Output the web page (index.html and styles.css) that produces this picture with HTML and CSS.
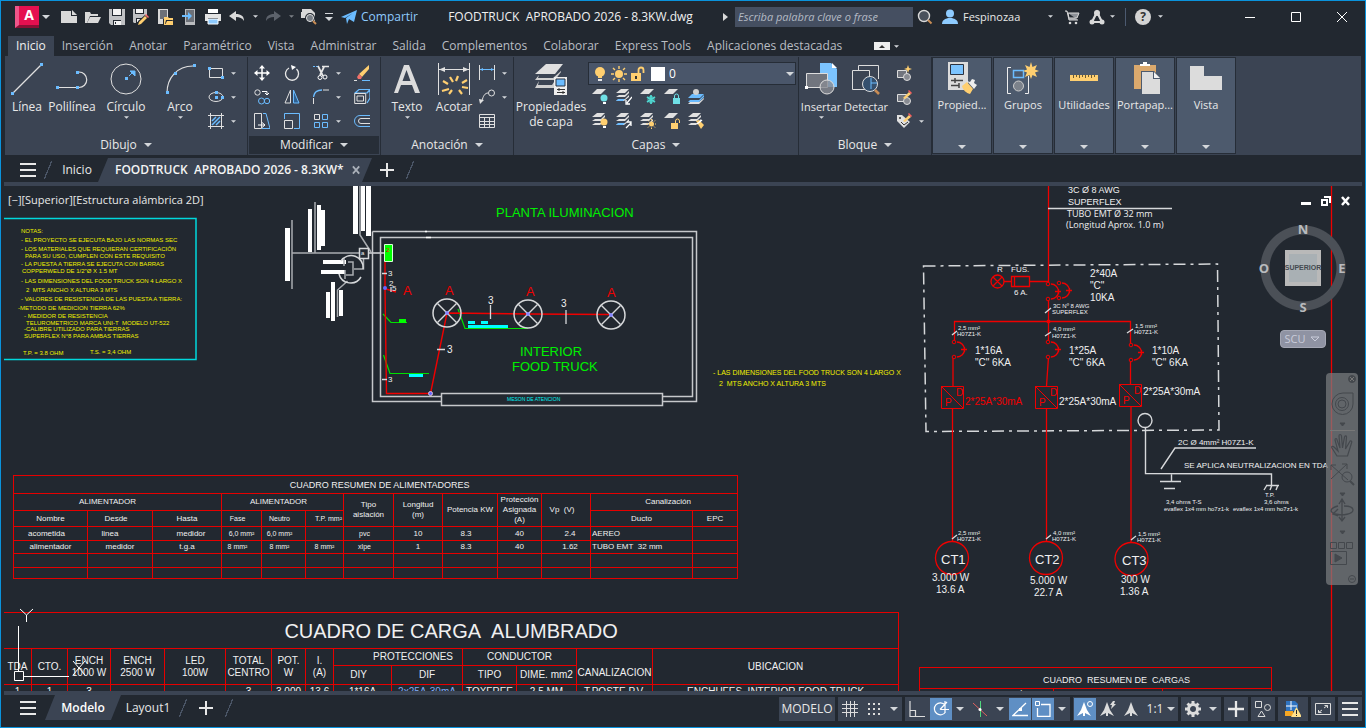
FILE: index.html
```html
<!DOCTYPE html>
<html lang="es">
<head>
<meta charset="utf-8">
<title>FOODTRUCK APROBADO 2026 - 8.3KW.dwg</title>
<link rel="stylesheet" href="styles.css">
</head>
<body>
<svg class="sprite" aria-hidden="true">
  <symbol id="down" viewBox="0 0 8 4"><path d="M0 0h8L4 4z" fill="#d4d7db"/></symbol>
  <symbol id="new" viewBox="0 0 16 16"><path d="M0 2h10v5h6v7H0z" fill="#d9d9d9"/><path d="M11 1l5 5h-5z" fill="#d9d9d9"/></symbol>
  <symbol id="open" viewBox="0 0 16 16"><path d="M0 14V3h5l1 2h7v2H5L2 14z" fill="#d9d9d9"/><path d="M5 8h11l-3 6H2z" fill="#d9d9d9"/></symbol>
  <symbol id="save" viewBox="0 0 16 16"><path d="M0 0h16v16H2l-2-2z" fill="#bfc1c4"/><path d="M3 0h10v7H3zM4 11h8v5H4z" fill="#222830"/><path d="M4 0h8v6H4zM5 12h7v4H5z" fill="#f4f4f4"/><path d="M6 13h1v2H6z" fill="#222830"/></symbol>
  <symbol id="saveas" viewBox="0 0 16 16"><path d="M0 0h14v7l-7 7H1l-1-1z" fill="#bfc1c4"/><path d="M2 0h9v5H2zM3 9h6v5H3z" fill="#222830"/><path d="M3 0h7v4H3zM4 10h4v3H4z" fill="#f4f4f4"/><path d="M5 12l7-6 3 3-7 6-4 1z" fill="#222830"/><path d="M6 13l6-6 2 2-6 6-3 1z" fill="#ffcf70"/><path d="M13 5l3 3-1 1-3-3z" fill="#ff6b6b"/></symbol>
  <symbol id="openweb" viewBox="0 0 16 16"><path d="M1 0h10v8H6v7H1z" fill="#d9d9d9"/><path d="M3 1h7v9H3z" fill="#6d7178"/><path d="M7 8h4l1 1h4v7H7z" fill="#ffcf70"/><path d="M9 11h7l-2 4H8z" fill="#222830"/><path d="M10 12h6l-2 4H8z" fill="#ffcf70"/></symbol>
  <symbol id="saveweb" viewBox="0 0 16 16"><path d="M4 0h10v16H4z" fill="#b9bbbe"/><path d="M5 1h8v12H5z" fill="#6d7178"/><path d="M1 6h6V3l4 4-4 4V8H1z" fill="#6bbcff"/></symbol>
  <symbol id="print" viewBox="0 0 16 16"><path d="M3 0h10v4H3z" fill="#fff"/><path d="M0 5h16v7h-3V9H3v3H0z" fill="#e4e4e4"/><path d="M3 10h10v5H3z" fill="#8ecbff" stroke="#fff"/></symbol>
  <symbol id="undo" viewBox="0 0 16 16"><path d="M7 2v3c5 0 8 2 8 7-2-3-4-4-8-4v4L0 7z" fill="currentColor"/></symbol>
  <symbol id="redo" viewBox="0 0 16 16"><path d="M9 2v3C4 5 1 7 1 12c2-3 4-4 8-4v4l7-5z" fill="currentColor"/></symbol>
  <symbol id="preview" viewBox="0 0 16 16"><path d="M1 0h9l4 4v8H5V9H0V3h1z" fill="#d9d9d9"/><circle cx="9" cy="9" r="4" fill="#777d85" stroke="#222830" stroke-width="2"/><circle cx="9" cy="9" r="3.500" fill="none" stroke="#eee"/><path d="M12 12l3 3" stroke="#c98d55" stroke-width="2"/></symbol>
  <symbol id="share" viewBox="0 0 16 16"><path d="M0 8L16 1l-3 12-5-3-2 5-1-6 7-5-8 5z" fill="#6bbcff"/></symbol>
  <symbol id="glass" viewBox="0 0 16 16"><circle cx="7" cy="7" r="5.500" fill="#4a515c" stroke="#d9d9d9" stroke-width="1.400"/><path d="M11 11l3.500 3.500" stroke="#c98d55" stroke-width="2"/></symbol>
  <symbol id="user" viewBox="0 0 16 16"><circle cx="8" cy="4.500" r="4" fill="#8ecbff"/><path d="M0 15c0-4 3-5 6-6h4c3 1 6 2 6 6z" fill="#8ecbff"/></symbol>
  <symbol id="cart" viewBox="0 0 16 16"><path d="M1 2h2l2 9h9M4 4h11l-2 5H5z" fill="#8e9298" stroke="#d9d9d9"/><circle cx="6" cy="14" r="1.300" fill="#d9d9d9"/><circle cx="12" cy="14" r="1.300" fill="#d9d9d9"/></symbol>
  <symbol id="adesk" viewBox="0 0 16 16"><path d="M8 3L3 13h10z" fill="none" stroke="#d9d9d9" stroke-width="2.200"/><circle cx="8" cy="4" r="3" fill="#d9d9d9"/><circle cx="3" cy="13" r="2.500" fill="#d9d9d9"/><circle cx="13" cy="13" r="2.500" fill="#d9d9d9"/></symbol>

  <symbol id="line" viewBox="0 0 32 32"><path d="M2 30L30 2" stroke="#e0e0e0" stroke-width="1.200"/><path d="M0 29h3v3H0zM29 0h3v3h-3z" fill="#6bbcff"/></symbol>
  <symbol id="pline" viewBox="0 0 32 32"><path d="M2 24.500h20M23 9a7.500 7.500 0 010 15.500" fill="none" stroke="#e0e0e0" stroke-width="1.200"/><path d="M0 23h3v3H0zM20 23h3v3h-3zM20 8h3v3h-3z" fill="#6bbcff"/></symbol>
  <symbol id="circle" viewBox="0 0 32 32"><circle cx="16" cy="16" r="15" fill="none" stroke="#e0e0e0"/><path d="M15 14h3v3h-3z" fill="#6bbcff"/><path d="M19 13l4-4M20 8h5v5z" fill="#6bbcff" stroke="#6bbcff"/></symbol>
  <symbol id="arc" viewBox="0 0 32 32"><path d="M3 30C3 15 13 3 29 3" fill="none" stroke="#e0e0e0" stroke-width="1.200"/><path d="M2 28h3v3H2zM10 9h3v3h-3zM29 1h3v3h-3z" fill="#6bbcff"/></symbol>
  <symbol id="rect" viewBox="0 0 16 16"><path d="M1.500 3.500h13v9h-13z" fill="none" stroke="#e0e0e0"/><path d="M0 2h3v3H0zM13 11h3v3h-3z" fill="#6bbcff"/></symbol>
  <symbol id="ellipse" viewBox="0 0 16 16"><ellipse cx="8" cy="8" rx="7" ry="4.500" fill="none" stroke="#e0e0e0"/><path d="M7 2h3v3H7zM7 7h3v3H7zM13 7h3v3h-3z" fill="#6bbcff"/></symbol>
  <symbol id="hatch" viewBox="0 0 16 16"><path d="M2.500 0v16M13.500 0v16M0 2.500h16M0 13.500h16" stroke="#e0e0e0"/><path d="M4 8l4-4M4 12l8-8M8 12l4-4" stroke="#6bbcff" stroke-width="1.500"/></symbol>
  <symbol id="move" viewBox="0 0 16 16"><path d="M8 1v14M1 8h14" stroke="#fff" stroke-width="1.500"/><path d="M8 0l3 3.500H5zM8 16l3-3.500H5zM0 8l3.500-3v6zM16 8l-3.500-3v6z" fill="#fff"/></symbol>
  <symbol id="rotate" viewBox="0 0 16 16"><path d="M5 3a6.500 6.500 0 107.500 1" fill="none" stroke="#e8e8e8" stroke-width="1.300"/><path d="M7 0l5 2-4 3z" fill="#fff"/></symbol>
  <symbol id="trim" viewBox="0 0 16 16"><path d="M0 1.500h5" stroke="#6bbcff" stroke-dasharray="2 1"/><path d="M9 1.500h7M5 1l5 10M11 2L7 10" stroke="#e8e8e8" stroke-width="1.700"/><circle cx="7" cy="12.500" r="2" fill="none" stroke="#fff"/><circle cx="12" cy="12" r="2" fill="none" stroke="#fff"/></symbol>
  <symbol id="erase" viewBox="0 0 16 16"><path d="M15 0v4l-7 8-3-3z" fill="#ffcf70"/><path d="M5 9l3 3-1 2H4l-1-2z" fill="#f0706a"/><path d="M0 15.500h3" stroke="#e0e0e0"/><path d="M8 15.500h8" stroke="#6bbcff"/></symbol>
  <symbol id="copy" viewBox="0 0 16 16"><circle cx="3.500" cy="3.500" r="2.700" fill="none" stroke="#e0e0e0"/><path d="M8 2.500h5v3M11 4l2 2 2-2" fill="none" stroke="#fff"/><circle cx="7.500" cy="12" r="3" fill="none" stroke="#6bbcff"/><circle cx="13" cy="12" r="2.700" fill="none" stroke="#6bbcff"/></symbol>
  <symbol id="mirror" viewBox="0 0 16 16"><path d="M6.500 1v13H1z" fill="none" stroke="#e0e0e0"/><path d="M9.500 1v13h5.500z" fill="#2f5f8f" stroke="#6bbcff"/></symbol>
  <symbol id="fillet" viewBox="0 0 16 16"><path d="M.5 15V9" stroke="#e0e0e0"/><path d="M.5 8C1 4 4 1 9 1" fill="none" stroke="#6bbcff" stroke-width="1.300"/><path d="M10 1h6" stroke="#e0e0e0"/></symbol>
  <symbol id="explode" viewBox="0 0 16 16"><path d="M1 4l4-3.500h11L13 4zM13 4l3-3v8l-3 5" fill="none" stroke="#6bbcff" stroke-width="1.200"/><path d="M.7 4.500h11v10H.7zM3 7h6.500v5H3z" fill="none" stroke="#e0e0e0"/></symbol>
  <symbol id="stretch" viewBox="0 0 16 16"><path d="M.5.500h7v15h-7z" fill="none" stroke="#e0e0e0"/><path d="M9 .5h3l4 15H8" fill="none" stroke="#6bbcff"/><path d="M4 12h6M8 9.500l3 2.500-3 2.500" fill="none" stroke="#fff"/></symbol>
  <symbol id="scale" viewBox="0 0 16 16"><path d="M.5 6V.5h15v15H10" fill="none" stroke="#6bbcff"/><path d="M.5 7.500h8v8h-8z" fill="none" stroke="#e0e0e0"/></symbol>
  <symbol id="array" viewBox="0 0 16 16"><path d="M1.500 1.500h5v5h-5z" fill="none" stroke="#e0e0e0"/><path d="M9.500 1.500h5v5h-5zM1.500 9.500h5v5h-5zM9.500 9.500h5v5h-5z" fill="none" stroke="#6bbcff"/></symbol>
  <symbol id="offset" viewBox="0 0 16 16"><path d="M16 2.500H6a5.500 5.500 0 000 11h10" fill="none" stroke="#6bbcff"/><path d="M16 5.500H7a2.500 2.500 0 000 5h9" fill="none" stroke="#e0e0e0"/></symbol>
  <symbol id="bigA" viewBox="0 0 32 32"><path fill-rule="evenodd" d="M13 2h5l11 28h-5l-3-8H10l-3 8H3zM15.500 7l-4 11h8z" fill="#dcdcdc"/></symbol>
  <symbol id="dim" viewBox="0 0 32 32"><path d="M.5 0v32M31.500 0v32M1 6.500h30" stroke="#e0e0e0"/><path d="M1 6.500l6-2.500v5zM31 6.500L25 4v5z" fill="#e0e0e0"/><path d="M12 14l3 5M20 13l-2 5M24 20l5-3M24 24l6 1M5 18l5 3M4 28l7-2M14 27l-3 4M21 27l3 4" stroke="#ffcf70" stroke-width="2.200"/></symbol>
  <symbol id="dimlin" viewBox="0 0 16 16"><path d="M.5 0v15M15.500 0v15" stroke="#e0e0e0"/><path d="M1 4.500h14" stroke="#6bbcff"/><path d="M1 4.500L4 3v3zM15 4.500L12 3v3z" fill="#6bbcff"/></symbol>
  <symbol id="leader" viewBox="0 0 16 16"><circle cx="12.500" cy="4" r="3" fill="none" stroke="#e0e0e0"/><path d="M9 4C6 4 4 7 3 12" fill="none" stroke="#e0e0e0"/><path d="M0 10l5 1-4 4z" fill="#e0e0e0"/></symbol>
  <symbol id="table" viewBox="0 0 16 16"><path d="M.5 1.500h15v13H.5zM.5 4.500h15M.5 8.500h15M.5 11.500h15M5.500 5v9.500M10.500 5v9.500" fill="none" stroke="#e0e0e0"/></symbol>
  <symbol id="layers" viewBox="0 0 32 32"><path d="M11 1h17l-8 10H0z" fill="#e0e0e0"/><path d="M4 12l-4 5h20l6-8v-1l-8 7H3M4 18l-4 7h19v-6l-2 3H3" fill="#d0d0d0"/><path d="M19 14h13v18H19z" fill="#eee"/><path d="M21 16h9v7h-9z" fill="#6bbcff" stroke="#2b3240"/><path d="M22 26.500h8M22 29.500h8M24 25v3M28 28v3" stroke="#333"/></symbol>
  <symbol id="sheet" viewBox="0 0 16 16"><path d="M5 0h9L9 5H0z" fill="#e0e0e0"/></symbol>
  <symbol id="stack" viewBox="0 0 16 16"><path d="M5 0h8L9 4H0zM3 6L0 8h9l4-4v-2l-4 4zM3 10l-3 2h8l5-4V6l-4 4z" fill="#e0e0e0"/></symbol>
  <symbol id="lay-off" viewBox="0 0 16 16"><use href="#sheet"/><circle cx="12" cy="9" r="3.500" fill="#6fe0e6"/><path d="M11 13h3v2h-3z" fill="#fff"/></symbol>
  <symbol id="lay-iso" viewBox="0 0 16 16"><use href="#stack"/><path d="M0 12l2-2h7l-2 2z" fill="#6bbcff"/><path d="M16 8l-5 6M10 11v4h4" fill="none" stroke="#fff" stroke-width="1.300"/></symbol>
  <symbol id="lay-frz" viewBox="0 0 16 16"><use href="#sheet"/><path d="M11 6v9M7 8l8 5M15 8l-8 5" stroke="#4fd6d0" stroke-width="1.800"/><circle cx="11" cy="10.500" r="3" fill="none" stroke="#4fd6d0"/></symbol>
  <symbol id="lay-lock" viewBox="0 0 16 16"><use href="#sheet"/><path d="M9 9h7v6H9z" fill="#6fe0e6"/><path d="M10.500 9V7a2 2 0 014 0v2" fill="none" stroke="#6fe0e6"/></symbol>
  <symbol id="lay-cur" viewBox="0 0 16 16"><path d="M4 5h12l-4 4H0zM2 11l-2 2h11l5-5v-2l-5 5z" fill="#6bbcff"/><path d="M0 15h11l5-5v-1l-5 4H2z" fill="#e0e0e0"/><circle cx="8" cy="3" r="3" fill="#d0d0d0"/></symbol>
  <symbol id="lay-on" viewBox="0 0 16 16"><use href="#stack"/><circle cx="12" cy="9" r="3.500" fill="#ffcf70"/><path d="M11 13h3v2h-3z" fill="#fff"/></symbol>
  <symbol id="lay-uniso" viewBox="0 0 16 16"><use href="#stack"/><path d="M0 12l2-2h7l-2 2z" fill="#6bbcff"/><path d="M10 15l5-5M11 9h4v4" fill="none" stroke="#fff" stroke-width="1.300"/></symbol>
  <symbol id="lay-thaw" viewBox="0 0 16 16"><use href="#stack"/><circle cx="11.500" cy="11" r="2.500" fill="#ffcf70"/><path d="M11.500 6v1.500M11.500 14.500V16M6.500 11H8M15 11h1.500M8 7.500l1 1M14 13.500l1 1M15 7.500l-1 1M9 13.500l-1 1" stroke="#ffcf70"/></symbol>
  <symbol id="lay-unlock" viewBox="0 0 16 16"><use href="#sheet"/><path d="M7 10h7v6H7z" fill="#ffcf70"/><path d="M11.500 10V8a2 2 0 014 0v2" fill="none" stroke="#ffcf70"/></symbol>
  <symbol id="lay-match" viewBox="0 0 16 16"><use href="#stack"/><path d="M8 8l3-1 5 5-3 4z" fill="#ffcf70"/><path d="M9 11l5-4" stroke="#fff" stroke-width="1.500"/></symbol>
  <symbol id="bulb" viewBox="0 0 16 16"><circle cx="8" cy="6" r="5" fill="#ffcf70"/><path d="M6 10h4v2H6z" fill="#ffcf70"/><path d="M6 13h4v2H6z" fill="#e8e8e8"/></symbol>
  <symbol id="sun" viewBox="0 0 16 16"><circle cx="8" cy="8" r="4" fill="#ffcf70"/><path d="M8 0v3M8 13v3M0 8h3M13 8h3M2 2l2 2M12 12l2 2M14 2l-2 2M4 12l-2 2" stroke="#ffcf70" stroke-width="1.400"/></symbol>
  <symbol id="lock" viewBox="0 0 16 16"><path d="M1 7h10v8H1z" fill="#ffcf70"/><path d="M8.500 7V4a2.500 2.500 0 015 0v3" fill="none" stroke="#ffcf70" stroke-width="1.800"/><path d="M5 10h2v3H5z" fill="#333"/></symbol>
  <symbol id="insert" viewBox="0 0 32 32"><path d="M15 0h11l6 6v18H15z" fill="#7cc4ff"/><path d="M27 0l5 5h-5z" fill="#fff"/><path d="M1.500 10.500h21v14h-21z" fill="#71757e" stroke="#ddd"/><circle cx="22" cy="24" r="7" fill="#888b92" fill-opacity=".8" stroke="#ddd"/><path d="M0 23h3v3H0z" fill="#fff"/></symbol>
  <symbol id="detect" viewBox="0 0 32 32"><path d="M8.500 8V2.500h20V16M2.500 7.500h17v19h-17z" fill="none" stroke="#ddd"/><circle cx="20" cy="21" r="7.500" fill="#35506e" stroke="#ddd"/><path d="M21 15v11M21 20h6" stroke="#6bbcff"/><path d="M25 27l4 4" stroke="#c98d55" stroke-width="2.500"/></symbol>
  <symbol id="blk-new" viewBox="0 0 16 16"><path d="M1.500 5.500h9v7h-9z" fill="#71757e" stroke="#ddd"/><circle cx="11" cy="12" r="3.500" fill="#888b92" stroke="#ddd"/><path d="M12 0l1 3 3 1-3 1-1 3-1-3-3-1 3-1z" fill="#ffcf70"/></symbol>
  <symbol id="blk-edit" viewBox="0 0 16 16"><path d="M1.500 5.500h9v7h-9z" fill="#71757e" stroke="#ddd"/><circle cx="11" cy="12" r="3.500" fill="#888b92" stroke="#ddd"/><path d="M7 9l6-6 2 2-6 5z" fill="#ffcf70"/><path d="M13 1l3 3-1 1-3-3z" fill="#ff5f5f"/></symbol>
  <symbol id="blk-att" viewBox="0 0 16 16"><path d="M1 2h5l8 7-6 6-7-7z" fill="#e0e0e0"/><circle cx="4" cy="5" r="1" fill="#333"/><path d="M5 9l3 3 4-3" fill="none" stroke="#333"/><path d="M7 8l6-6 2 2-6 5z" fill="#ffcf70"/><path d="M13 0l3 3-1 1-3-3z" fill="#ff5f5f"/></symbol>
  <symbol id="props" viewBox="0 0 32 32"><path d="M2 0h20v28H2z" fill="#dcdcdc"/><path d="M4.500 2.500h13v10h-13z" fill="#7cc4ff" stroke="#2b3240"/><path d="M5 18.500h12M5 23.500h8M9 16v5M13 21v5" stroke="#444" stroke-width="1.500"/><path d="M16 24l5-4 6 7-3 5c-4-1-7-4-8-8z" fill="#ffcf70"/><path d="M21 19l3 1 2-3 3 1-1 3 3 2-3 4z" fill="#eee"/></symbol>
  <symbol id="groups" viewBox="0 0 32 32"><path d="M4 5.500H.5v26H4M18 31.500h3.500V14" fill="none" stroke="#eee"/><path d="M6.500 8.500h10v7h-10z" fill="none" stroke="#6bbcff" stroke-width="1.500"/><circle cx="11.500" cy="24" r="5" fill="#7c828b" stroke="#ccc"/><path d="M24 0l1.500 5L30 3l-2 4.500 4 1.500-4 1.500 2 4.500-4.500-2L24 17l-1.500-4-4.500 2 2-4.500L16 9l4-1.500L18 3l4.500 2z" fill="#ffcf70"/></symbol>
  <symbol id="ruler" viewBox="0 0 32 32"><path d="M2 13h28v6H2z" fill="#ffcf70"/><path d="M5.500 13v3M8.500 13v2M11.500 13v3M14.500 13v2M17.500 13v3M20.500 13v2M23.500 13v3M26.500 13v2" stroke="#6b5a32"/></symbol>
  <symbol id="clip" viewBox="0 0 32 32"><path d="M5 3h22v24H5z" fill="#dba96d"/><path d="M11 4V2h3V0h4v2h3v2z" fill="#fff"/><path d="M12 9h13l7 7v17H12z" fill="#4d5a6d"/><path d="M13 10h11v7h7v15H13z" fill="#dcdcdc"/><path d="M25 10l6 6h-6z" fill="#f4f4f4"/></symbol>
  <symbol id="view" viewBox="0 0 32 32"><path d="M0 4h14v10h18v14H0z" fill="#dcdcdc"/></symbol>
  <symbol id="menu" viewBox="0 0 16 14"><path d="M0 1h16M0 7h16M0 13h16" stroke="#e8e8e8" stroke-width="2"/></symbol>
  <symbol id="plus" viewBox="0 0 14 14"><path d="M7 0v14M0 7h14" stroke="#e8e8e8" stroke-width="2"/></symbol>

  <symbol id="s-grid" viewBox="0 0 16 16"><path d="M4.500 0v16M8.500 0v16M12.500 0v16M0 3.500h16M0 7.500h16M0 11.500h16" stroke="#dcdcdc"/></symbol>
  <symbol id="s-snap" viewBox="0 0 16 16"><path d="M2 3h12M2 8h12M2 13h12" stroke="#dcdcdc" stroke-width="2" stroke-dasharray="2 3"/></symbol>
  <symbol id="s-ortho" viewBox="0 0 16 16"><path d="M1 0v15.500h15M1 9.500h5.500V15" fill="none" stroke="#dcdcdc" stroke-width="1.200"/></symbol>
  <symbol id="s-polar" viewBox="0 0 16 16"><path d="M12 4a6 6 0 10.500 7M7 8.500h9M7 8.500L14 1M12 0v12" fill="none" stroke="#fff" stroke-width="1.200"/></symbol>
  <symbol id="s-iso" viewBox="0 0 16 16"><path d="M1 2l14 13" stroke="#e0605e"/><path d="M8.500 0v16" stroke="#4fd67c"/><circle cx="8" cy="8.500" r="1.500" fill="#fff"/></symbol>
  <symbol id="s-track" viewBox="0 0 16 16"><path d="M16 14.500H1L14 2" fill="none" stroke="#fff" stroke-width="1.300"/><path d="M7 7h3v3H7z" fill="#fff"/></symbol>
  <symbol id="s-osnap" viewBox="0 0 16 16"><path d="M6 3.500h9v12H2.500V7" fill="none" stroke="#fff" stroke-width="1.300"/><path d="M.5.500h4v4h-4z" fill="#5f8fc4" stroke="#fff"/></symbol>
  <symbol id="s-ann" viewBox="0 0 16 16"><path d="M7 1l3 8 4 6-6-3v3H6v-3l-6 3 4-6z" fill="#dcdcdc"/></symbol>
  <symbol id="s-annvis" viewBox="0 0 16 16"><path d="M7 1l3 8 4 6-6-3v3H6v-3l-6 3 4-6z" fill="#fff"/><circle cx="13" cy="3" r="2.500" fill="#5f8fc4" stroke="#fff"/></symbol>
  <symbol id="s-annauto" viewBox="0 0 16 16"><path d="M7 1l3 8 4 6-6-3v3H6v-3l-6 3 4-6z" fill="#dcdcdc"/><path d="M13 0l-3 4h2l-1 4 5-5h-2l1-3z" fill="#dcdcdc"/></symbol>
  <symbol id="s-gear" viewBox="0 0 16 16"><circle cx="8" cy="8" r="4.500" fill="none" stroke="#dcdcdc" stroke-width="3"/><path d="M8 0v3M8 13v3M0 8h3M13 8h3M2.500 2.500l2 2M11.500 11.500l2 2M13.500 2.500l-2 2M4.500 11.500l-2 2" stroke="#dcdcdc" stroke-width="3"/></symbol>
  <symbol id="s-units" viewBox="0 0 16 16"><path d="M.5.500h6v6h-6zM6.500 10L10 15.500H3z" fill="none" stroke="#dcdcdc"/><circle cx="12.500" cy="6.500" r="3" fill="none" stroke="#dcdcdc"/></symbol>
  <symbol id="s-hw" viewBox="0 0 16 16"><path d="M1 0h9l3 3v7H1z" fill="#2f73c0"/><path d="M6 0v9M1 5h11" stroke="#fff"/><path d="M0 10h8v5H0z" fill="#f5a623"/><path d="M11.500 6L17 16H6z" fill="#ffe08a"/><path d="M11.500 9v4M11.500 14v1" stroke="#222"/></symbol>
  <symbol id="s-full" viewBox="0 0 16 14"><path d="M.5 1.500h15v11H.5z" fill="none" stroke="#dcdcdc"/><path d="M9 6l3.500-2.500M9.500 3.500h3V6M7 8l-3.500 2.500M3.500 8v2.500h3" fill="none" stroke="#dcdcdc"/></symbol>

  <symbol id="lamp" viewBox="-15 -15 30 30"><circle r="14" fill="none" stroke="#d6d8da" stroke-width="1.500"/><path d="M-9.500-9.500l19 19M9.500-9.500l-19 19" stroke="#d6d8da" stroke-width="1.400"/><circle r="2" fill="#8888ff"/></symbol>
  <symbol id="breaker" viewBox="-3 -3 18 22"><path d="M3 0a7.500 7.500 0 010 15M7 7.500h6M10.500 5v5" fill="none" stroke="#f00000" stroke-width="1.300"/><circle r="1.800" fill="#222830" stroke="#f00000"/><circle cy="15" r="1.800" fill="#222830" stroke="#f00000"/></symbol>
  <symbol id="rcd" viewBox="0 0 24 24"><path d="M1.500 1.500h22v22h-22zM1 1l22 22" fill="none" stroke="#f00000"/></symbol>
</svg>

<div class="app">
  <header class="titlebar">
    <button class="logo" aria-label="Menú de la aplicación"><span>A</span></button>
    <button class="drop" aria-label="Menú"><svg class="arr"><use href="#down"/></svg></button>
    <nav class="quick" aria-label="Acceso rápido">
      <button aria-label="Nuevo"><svg class="i16"><use href="#new"/></svg></button>
      <button aria-label="Abrir"><svg class="i16"><use href="#open"/></svg></button>
      <button aria-label="Guardar"><svg class="i16"><use href="#save"/></svg></button>
      <button aria-label="Guardar como"><svg class="i16"><use href="#saveas"/></svg></button>
      <button aria-label="Abrir desde web"><svg class="i16"><use href="#openweb"/></svg></button>
      <button aria-label="Guardar en web"><svg class="i16"><use href="#saveweb"/></svg></button>
      <button aria-label="Imprimir"><svg class="i16"><use href="#print"/></svg></button>
      <button aria-label="Deshacer"><svg class="i16 lit"><use href="#undo"/></svg></button>
      <button class="narrow" aria-label="Lista deshacer"><svg class="arr-s"><use href="#down"/></svg></button>
      <button aria-label="Rehacer"><svg class="i16 dim"><use href="#redo"/></svg></button>
      <button class="narrow faded" aria-label="Lista rehacer"><svg class="arr-s"><use href="#down"/></svg></button>
      <button aria-label="Vista previa"><svg class="i16"><use href="#preview"/></svg></button>
      <button class="more" aria-label="Personalizar"><svg class="arr"><use href="#down"/></svg></button>
    </nav>
    <button class="share"><svg class="i16"><use href="#share"/></svg>Compartir</button>
    <h1>FOODTRUCK  APROBADO 2026 - 8.3KW.dwg</h1>
    <span class="play"></span>
    <input class="search" type="text" placeholder="Escriba palabra clave o frase" aria-label="Buscar">
    <button class="tb24" aria-label="Buscar"><svg class="i16"><use href="#glass"/></svg></button>
    <button class="account"><svg class="i16"><use href="#user"/></svg><span>Fespinozaa</span><svg class="arr-s"><use href="#down"/></svg></button>
    <button class="tb24" aria-label="Tienda"><svg class="i16"><use href="#cart"/></svg></button>
    <button class="tb36" aria-label="Autodesk"><svg class="i16"><use href="#adesk"/></svg><svg class="arr-s"><use href="#down"/></svg></button>
    <button class="help" aria-label="Ayuda"><i>?</i><svg class="arr-s"><use href="#down"/></svg></button>
    <div class="winctl">
      <button aria-label="Minimizar"><svg class="i10" viewBox="0 0 10 10"><path d="M0 5.500h10" stroke="#fff"/></svg></button>
      <button aria-label="Maximizar"><svg class="i10" viewBox="0 0 10 10"><path d="M.5.500h9v9h-9z" fill="none" stroke="#fff"/></svg></button>
      <button aria-label="Cerrar"><svg class="i10" viewBox="0 0 10 10"><path d="M0 0l10 10M10 0L0 10" stroke="#fff"/></svg></button>
    </div>
  </header>

  <nav class="tabs">
    <button class="on">Inicio</button><button>Inserción</button><button>Anotar</button><button>Paramétrico</button><button>Vista</button><button>Administrar</button><button>Salida</button><button>Complementos</button><button>Colaborar</button><button>Express Tools</button><button>Aplicaciones destacadas</button>
    <button class="fold" aria-label="Minimizar cinta"><span></span></button><svg class="arr-s"><use href="#down"/></svg>
  </nav>

  <section class="ribbon">
    <div class="panel draw">
      <div class="tools">
        <button class="big w44"><svg class="i32"><use href="#line"/></svg>Línea</button>
        <button class="big w46"><svg class="i32"><use href="#pline"/></svg>Polilínea</button>
        <button class="big w62"><svg class="i32"><use href="#circle"/></svg>Círculo<svg class="arr-s"><use href="#down"/></svg></button>
        <button class="big w46"><svg class="i32"><use href="#arc"/></svg>Arco<svg class="arr-s"><use href="#down"/></svg></button>
        <div class="small one">
          <button class="dd" aria-label="Rectángulo"><svg class="i16"><use href="#rect"/></svg><svg class="arr-s"><use href="#down"/></svg></button>
          <button class="dd" aria-label="Elipse"><svg class="i16"><use href="#ellipse"/></svg><svg class="arr-s"><use href="#down"/></svg></button>
          <button class="dd" aria-label="Sombreado"><svg class="i16"><use href="#hatch"/></svg><svg class="arr-s"><use href="#down"/></svg></button>
        </div>
      </div>
      <button class="ptitle">Dibujo<svg class="arr"><use href="#down"/></svg></button>
    </div>
    <div class="panel modify">
      <div class="tools">
        <div class="small four">
          <button aria-label="Desplazar"><svg class="i16"><use href="#move"/></svg></button>
          <button aria-label="Girar"><svg class="i16"><use href="#rotate"/></svg></button>
          <button class="dd" aria-label="Recortar"><svg class="i16"><use href="#trim"/></svg><svg class="arr-s"><use href="#down"/></svg></button>
          <button aria-label="Borrar"><svg class="i16"><use href="#erase"/></svg></button>
          <button aria-label="Copiar"><svg class="i16"><use href="#copy"/></svg></button>
          <button aria-label="Simetría"><svg class="i16"><use href="#mirror"/></svg></button>
          <button class="dd" aria-label="Empalme"><svg class="i16"><use href="#fillet"/></svg><svg class="arr-s"><use href="#down"/></svg></button>
          <button aria-label="Descomponer"><svg class="i16"><use href="#explode"/></svg></button>
          <button aria-label="Estirar"><svg class="i16"><use href="#stretch"/></svg></button>
          <button aria-label="Escala"><svg class="i16"><use href="#scale"/></svg></button>
          <button class="dd" aria-label="Matriz"><svg class="i16"><use href="#array"/></svg><svg class="arr-s"><use href="#down"/></svg></button>
          <button aria-label="Desfase"><svg class="i16"><use href="#offset"/></svg></button>
        </div>
      </div>
      <button class="ptitle hot">Modificar<svg class="arr"><use href="#down"/></svg></button>
    </div>
    <div class="panel annot">
      <div class="tools">
        <button class="big w52"><svg class="i32"><use href="#bigA"/></svg>Texto<svg class="arr-s"><use href="#down"/></svg></button>
        <button class="big w42"><svg class="i32"><use href="#dim"/></svg>Acotar</button>
        <div class="small one">
          <button class="dd" aria-label="Lineal"><svg class="i16"><use href="#dimlin"/></svg><svg class="arr-s"><use href="#down"/></svg></button>
          <button class="dd" aria-label="Directriz"><svg class="i16"><use href="#leader"/></svg><svg class="arr-s"><use href="#down"/></svg></button>
          <button aria-label="Tabla"><svg class="i16"><use href="#table"/></svg></button>
        </div>
      </div>
      <button class="ptitle">Anotación<svg class="arr"><use href="#down"/></svg></button>
    </div>
    <div class="panel layer">
      <div class="tools">
        <button class="big w74"><svg class="i32"><use href="#layers"/></svg>Propiedades<br>de capa</button>
        <div class="layertools">
          <div class="layersel">
            <svg class="i16"><use href="#bulb"/></svg><svg class="i16"><use href="#sun"/></svg><svg class="i16"><use href="#lock"/></svg><i></i>
            <select aria-label="Capa"><option>0</option></select>
            <svg class="arr"><use href="#down"/></svg>
          </div>
          <div class="small five">
            <button aria-label="Desactivar"><svg class="i16"><use href="#lay-off"/></svg></button>
            <button aria-label="Aislar"><svg class="i16"><use href="#lay-iso"/></svg></button>
            <button aria-label="Inutilizar"><svg class="i16"><use href="#lay-frz"/></svg></button>
            <button aria-label="Bloquear"><svg class="i16"><use href="#lay-lock"/></svg></button>
            <button aria-label="Definir actual"><svg class="i16"><use href="#lay-cur"/></svg></button>
            <button aria-label="Activar todas"><svg class="i16"><use href="#lay-on"/></svg></button>
            <button aria-label="Dejar de aislar"><svg class="i16"><use href="#lay-uniso"/></svg></button>
            <button aria-label="Reutilizar"><svg class="i16"><use href="#lay-thaw"/></svg></button>
            <button aria-label="Desbloquear"><svg class="i16"><use href="#lay-unlock"/></svg></button>
            <button aria-label="Igualar capa"><svg class="i16"><use href="#lay-match"/></svg></button>
          </div>
        </div>
      </div>
      <button class="ptitle">Capas<svg class="arr"><use href="#down"/></svg></button>
    </div>
    <div class="panel block">
      <div class="tools">
        <button class="big w44"><svg class="i32"><use href="#insert"/></svg>Insertar<svg class="arr-s"><use href="#down"/></svg></button>
        <button class="big w46"><svg class="i32"><use href="#detect"/></svg>Detectar</button>
        <div class="small one">
          <button aria-label="Crear bloque"><svg class="i16"><use href="#blk-new"/></svg></button>
          <button aria-label="Editar bloque"><svg class="i16"><use href="#blk-edit"/></svg></button>
          <button class="dd" aria-label="Editar atributo"><svg class="i16"><use href="#blk-att"/></svg><svg class="arr-s"><use href="#down"/></svg></button>
        </div>
      </div>
      <button class="ptitle">Bloque<svg class="arr"><use href="#down"/></svg></button>
    </div>
    <div class="folded">
      <button><svg class="i32"><use href="#props"/></svg><span>Propied...</span><svg class="arr"><use href="#down"/></svg></button>
      <button><svg class="i32"><use href="#groups"/></svg><span>Grupos</span><svg class="arr"><use href="#down"/></svg></button>
      <button><svg class="i32"><use href="#ruler"/></svg><span>Utilidades</span><svg class="arr"><use href="#down"/></svg></button>
      <button><svg class="i32"><use href="#clip"/></svg><span>Portapap...</span><svg class="arr"><use href="#down"/></svg></button>
      <button><svg class="i32"><use href="#view"/></svg><span>Vista</span><svg class="arr"><use href="#down"/></svg></button>
    </div>
  </section>

  <nav class="files">
    <button class="burger" aria-label="Menú de archivos"><svg class="menuico"><use href="#menu"/></svg></button>
    <span class="slash"></span>
    <button class="start">Inicio</button>
    <div class="file"><b>FOODTRUCK  APROBADO 2026 - 8.3KW*</b><button aria-label="Cerrar archivo"><svg class="x" viewBox="0 0 10 10"><path d="M1 1l7 8M8 1L1 9" stroke="#aab0b9" stroke-width="2"/></svg></button></div>
    <button class="add" aria-label="Nuevo dibujo"><svg class="plusico"><use href="#plus"/></svg></button>
    <span class="slash"></span>
  </nav>

  <main class="canvas">
    <table class="cad feeders">
      <colgroup><col class="c74"><col class="c65"><col class="c69"><col class="c40"><col class="c44"><col class="c38"><col class="c50"><col class="c49"><col class="c55"><col class="c44"><col class="c49"><col class="c102"><col class="c45"></colgroup>
      <tbody>
      <tr class="h18"><th colspan="13" class="t9 far">CUADRO RESUMEN DE ALIMENTADORES</th></tr>
      <tr class="h17"><th colspan="3" class="wide">ALIMENTADOR</th><th colspan="3" class="near">ALIMENTADOR</th><th rowspan="2">Tipo<br>aislación</th><th rowspan="2">Longitud<br>(m)</th><th rowspan="2">Potencia KW</th><th rowspan="2">Protección<br>Asignada<br>(A)</th><th rowspan="2" class="near">Vp&nbsp; (V)</th><th colspan="2" class="far">Canalización</th></tr>
      <tr class="h16"><th>Nombre</th><th class="near">Desde</th><th>Hasta</th><th class="t7 near">Fase</th><th class="t7 near">Neutro</th><th class="t7 far">T.P. mm²</th><th>Ducto</th><th>EPC</th></tr>
      <tr class="h14"><td class="near">acometida</td><td class="wide">linea</td><td class="far">medidor</td><td class="t7">6,0 mm²</td><td class="t7 near">6,0 mm²</td><td></td><td class="t7 near">pvc</td><td>10</td><td class="near">8.3</td><td>40</td><td class="far">2.4</td><td class="left">AEREO</td><td></td></tr>
      <tr class="h13"><td>alimentador</td><td>medidor</td><td>t.g.a</td><td class="t7 near">8 mm²</td><td class="t7 near">8 mm²</td><td class="t7">8 mm²</td><td class="t7 near">xlpe</td><td>1</td><td class="near">8.3</td><td>40</td><td class="far">1.62</td><td class="left">TUBO EMT&nbsp; 32 mm</td><td></td></tr>
      <tr class="h14"><td></td><td></td><td></td><td></td><td></td><td></td><td></td><td></td><td></td><td></td><td></td><td></td><td></td></tr>
      <tr class="h11"><td></td><td></td><td></td><td></td><td></td><td></td><td></td><td></td><td></td><td></td><td></td><td></td><td></td></tr>
      </tbody>
    </table>

    <table class="cad loads">
      <colgroup><col class="c28"><col class="c36"><col class="c43"><col class="c54"><col class="c61"><col class="c46"><col class="c34"><col class="c28"><col class="c58"><col class="c71"><col class="c54"><col class="c60"><col class="c76"><col class="c246"></colgroup>
      <tbody>
      <tr class="h36"><th colspan="14" class="t20">CUADRO DE CARGA&nbsp; ALUMBRADO</th></tr>
      <tr class="h17"><th rowspan="2">TDA</th><th rowspan="2">CTO.</th><th rowspan="2">ENCH<br>1000 W</th><th rowspan="2">ENCH<br>2500 W</th><th rowspan="2">LED<br>100W</th><th rowspan="2">TOTAL<br>CENTRO</th><th rowspan="2">POT.<br>W</th><th rowspan="2">I.<br>(A)</th><th colspan="2" class="push">PROTECCIONES</th><th colspan="2">CONDUCTOR</th><th rowspan="2" class="low">CANALIZACION</th><th rowspan="2">UBICACION</th></tr>
      <tr class="h19"><th class="near">DIY</th><th>DIF</th><th>TIPO</th><th>DIME. mm2</th></tr>
      <tr class="h20"><td>1</td><td>1</td><td>3</td><td></td><td></td><td>3</td><td>3.000</td><td>13.6</td><td>1*16A</td><td class="blue">2x25A-30mA</td><td>TOXFREE</td><td>2,5 MM</td><td>T.POSTE P.V.</td><td>ENCHUFES&nbsp; INTERIOR FOOD TRUCK</td></tr>
      </tbody>
    </table>

    <table class="cad summary">
      <colgroup><col class="c134"><col class="c109"><col class="c109"></colgroup>
      <tbody>
      <tr class="h21"><th colspan="3" class="t9">CUADRO&nbsp; RESUMEN DE&nbsp; CARGAS</th></tr>
      <tr class="h20"><td class="push">TDA Local</td><td>T.D.F</td><td>T.D.S</td></tr>
      </tbody>
    </table>

    <svg class="drawing" width="1358" height="505" viewBox="4 186 1358 505">
      <g class="yellow s6">
        <text x="21" y="233">NOTAS:</text>
        <text x="21" y="242">- EL PROYECTO SE EJECUTA BAJO LAS NORMAS SEC</text>
        <text x="21" y="251">- LOS MATERIALES QUE REQUIERAN CERTIFICACIÓN</text>
        <text x="25" y="258">PARA SU USO, CUMPLEN CON ESTE REQUISITO</text>
        <text x="21" y="266">- LA PUESTA A TIERRA SE EJECUTA CON BARRAS</text>
        <text x="22" y="273">COPPERWELD DE 1/2"Ø X 1.5 MT</text>
        <text x="21" y="283">- LAS DIMENSIONES DEL FOOD TRUCK SON 4 LARGO X</text>
        <text x="26" y="292">2&#160; MTS ANCHO X ALTURA 3 MTS</text>
        <text x="21" y="301">- VALORES DE RESISTENCIA DE LAS PUESTA A TIERRA:</text>
        <text x="18" y="310">-METODO DE MEDICION TIERRA 62%</text>
        <text x="24" y="318">- MEDIDOR DE RESISTENCIA</text>
        <text x="26" y="325">TELUROMETRICO MARCA UNI-T&#160; MODELO UT-522</text>
        <text x="24" y="331">-CALIBRE UTILIZADO PARA TIERRAS</text>
        <text x="24" y="338">SUPERFLEX N°8 PARA AMBAS TIERRAS</text>
        <text x="23" y="355">T.P. = 3.8 OHM</text>
        <text x="90" y="354">T.S. = 3,4 OHM</text>
      </g>
      <path d="M4 218.500h192v141H4" fill="none" stroke="#00d8dc" stroke-width="1.500"/>

      <path d="M285 228h5v53h-5zM308 209h4v43h-4zM317 205h4v45h-4zM321 210h4v36h-4zM353 186h5v48h-5zM361 186h4v45h-4zM366 186h5v50h-5zM323 260h23v4h-23zM321 270h24v4h-24zM326 292h4v26h-4zM331 282h4v39h-4zM339 290h4v26h-4z" fill="#fff"/>
      <g fill="none" stroke="#a9acb0" stroke-width="1.500">
        <path d="M292 220v69M315 202v51M360 186v49l11 17M292 253h67M337.500 317v-27l10-9M363.500 259v10H354M348 262h5v13h-7M344 258v8M345 270v9"/>
        <path d="M341 261a12 12 0 0122 8M339 274a12 12 0 0022 3" stroke="#d6d8da"/>
        <path d="M359.500 248.500h9v10h-9zM368 253h16" stroke="#d6d8da"/>
        <path d="M372.500 231.500h324v170H662M442 401.500h-69.500v-170M441 396.500h-60.500v-159h312v159H662" stroke="#c6c8cb"/>
        <path d="M441.500 393.500h221v12h-221z" stroke="#c6c8cb"/>
        <path d="M425 231.500h2M426 237.500h5" stroke="#fff"/>
      </g>
      <text x="361" y="255" class="white s6">a</text>
      <path d="M384.500 244.500h8v17h-8z" fill="#0f0" stroke="#d8ffd8"/>
      <text x="386" y="252" class="red s6">2</text>
      <text x="507" y="401" class="cyan s5">MESON DE ATENCION</text>

      <g class="green s13"><text x="496" y="217">PLANTA ILUMINACION</text><text x="520" y="356">INTERIOR</text><text x="512" y="371">FOOD TRUCK</text></g>
      <g fill="none" stroke="#00e000" stroke-width="1.200"><path d="M383 314l8 8.500h16M383.500 355l6.500 18.500h39M458 309l7 19.500h63"/></g>
      <path d="M399 319h7v4h-7z" fill="#0f0"/>
      <path d="M409 374h14v3h-14zM468 321h7v3h-7zM481 321h7v3h-7zM468 325h40v3h-40z" fill="#0ff"/>
      <path d="M385 262v26l1.500 105.500h44L447 313l81 1 82.500.5M386 289l10 3" fill="none" stroke="#f00000" stroke-width="1.400"/>
      <use href="#lamp" x="432" y="298" width="30" height="30"/>
      <use href="#lamp" x="513" y="299" width="30" height="30"/>
      <use href="#lamp" x="596" y="300" width="30" height="30"/>
      <circle cx="385" cy="288" r="2" fill="#66f"/><circle cx="430.500" cy="393.500" r="2" fill="#66f" stroke="#d9c0d9"/>
      <g class="red s13"><text x="403" y="295">A</text><text x="445" y="295">A</text><text x="526" y="296">A</text><text x="607" y="297">A</text></g>
      <path d="M490.500 305v14M566 310v14M437 349.500h8M382 273.500h5M382 379.500h5M391 287v5" stroke="#d6d8da" stroke-width="1.300"/>
      <g class="white s10"><text x="488" y="304">3</text><text x="561" y="307">3</text><text x="447" y="353">3</text></g>
      <g class="white s8"><text x="388" y="276">3</text><text x="389" y="286">2</text><text x="392" y="291">5</text><text x="388" y="382">3</text></g>
      <g class="yellow s7"><text x="713" y="375">- LAS DIMENSIONES DEL FOOD TRUCK SON 4 LARGO X</text><text x="719" y="386">2&#160; MTS ANCHO X ALTURA 3 MTS</text></g>

      <g class="white s9"><text x="1068" y="193">3C Ø 8 AWG</text><text x="1068" y="205">SUPERFLEX</text></g>
      <g class="white sans9"><text x="1067" y="217">TUBO EMT Ø 32 mm</text><text x="1066" y="228">(Longitud Aprox. 1.0 m)</text></g>
      <path d="M923.500 266l294-2 1.500 166-293 1.500z" fill="none" stroke="#d6d8da" stroke-width="1.500" stroke-dasharray="12 5 3 5"/>
      <g fill="none" stroke="#f00000" stroke-width="1.300">
        <path d="M1331.500 186v505M1048.500 186v97M1048.500 298v44M954.500 342v-20.500h176V344M953 357v29M1048.500 357l-2 29M1130.500 360v24M952.500 409v132M1046.500 409v132M1131 407v135"/>
        <circle cx="997.500" cy="281.500" r="6.500"/><path d="M993 277l9 9M1002 277l-9 9M1004 281.500h7M1011.500 276.500h18v10h-18zM1014.500 276v11M1030 281.500h18"/>
        <circle cx="952" cy="558" r="16.500"/><circle cx="1046" cy="558" r="16.500"/><circle cx="1131.500" cy="559" r="16.500"/>
      </g>
      <circle cx="1048.500" cy="321.500" r="2" fill="#f00000"/>
      <use href="#breaker" x="1045" y="281" width="18" height="22"/><use href="#breaker" x="1056" y="280" width="18" height="22"/>
      <use href="#breaker" x="951" y="339" width="18" height="22"/><use href="#breaker" x="1045" y="339" width="18" height="22"/><use href="#breaker" x="1128" y="342" width="18" height="22"/>
      <use href="#rcd" x="940" y="385" width="24" height="24"/><use href="#rcd" x="1034" y="385" width="24" height="24"/><use href="#rcd" x="1118" y="383" width="24" height="24"/>
      <g class="red s10"><text x="945" y="406">P</text><text x="1039" y="406">P</text><text x="1123" y="404">P</text><text x="956" y="396">D</text><text x="1050" y="396">D</text><text x="1134" y="394">D</text><text x="965" y="405">2*25A*30mA</text></g>
      <g class="white s10">
        <text x="1059" y="405">2*25A*30mA</text><text x="1143" y="395">2*25A*30mA</text>
        <text x="1090" y="277">2*40A</text><text x="1090" y="289">"C"</text><text x="1090" y="301">10KA</text>
        <text x="975" y="354">1*16A</text><text x="975" y="366">"C" 6KA</text>
        <text x="1069" y="354">1*25A</text><text x="1069" y="366">"C" 6KA</text>
        <text x="1152" y="354">1*10A</text><text x="1152" y="366">"C" 6KA</text>
        <text x="932" y="581">3.000 W</text><text x="936" y="593">13.6 A</text>
        <text x="1030" y="584">5.000 W</text><text x="1034" y="596">22.7 A</text>
        <text x="1121" y="583">300 W</text><text x="1120" y="595">1.36 A</text>
      </g>
      <g class="white s13"><text x="941" y="564">CT1</text><text x="1035" y="564">CT2</text><text x="1122" y="565">CT3</text></g>
      <g class="white s8"><text x="997" y="272">R</text><text x="1011" y="272">FUS.</text><text x="1014" y="295">6 A.</text><text x="1178" y="445">2C Ø 4mm² H07Z1-K</text><text x="1184" y="468">SE APLICA NEUTRALIZACION EN TDA</text></g>
      <g class="white s6">
        <text x="1053" y="308">3C Nº 8 AWG</text><text x="1052" y="314">SUPERFLEX</text>
        <text x="958" y="330">2,5 mm²</text><text x="957" y="336">H07Z1-K</text><text x="1053" y="331">4,0 mm²</text><text x="1052" y="338">H07Z1-K</text><text x="1135" y="328">1,5 mm²</text><text x="1134" y="334">H07Z1-K</text>
        <text x="958" y="535">2,5 mm²</text><text x="957" y="541">H07Z1-K</text><text x="1053" y="535">4,0 mm²</text><text x="1052" y="541">H07Z1-K</text><text x="1138" y="536">1,5 mm²</text><text x="1137" y="542">H07Z1-K</text>
        <text x="1166" y="504">3,4 ohms T-S</text><text x="1164" y="511">evaflex 1x4 mm ho7z1-k</text><text x="1264" y="504">3,6 ohms</text><text x="1233" y="511">evaflex 1x4 mm ho7z1-k</text><text x="1265" y="497">T.P.</text>
      </g>
      <g fill="none" stroke="#d6d8da" stroke-width="1.400">
        <path d="M1048 208.500h124M1045 313l6-5M952 335l5-4M1045 336l6-4M1127 333l6-4M952 539l5-4M1046 539l5-4M1131 540l5-4"/>
        <circle cx="1145" cy="420.500" r="7"/><path d="M1145.500 428v45.500l126 .5v11M1161 469l14-21h81M1171.500 474v7M1160 481.500h21M1164 488.500h11M1266 485.500h13M1267 485l-3 5M1272 485l-2 5M1278 485l-2 5"/>
      </g>
      <g fill="none" stroke="#fff"><path d="M18.500 626v45M23 676.500h46M14.500 671.500h9v9h-9zM20 609l6.500 6 6.500-6M26.500 615v7M73 661l12 14M85 661l-12 14"/></g>
    </svg>

    <p class="viewlabel">[−][Superior][Estructura alámbrica 2D]</p>

    <div class="overlay">
      <div class="vpctl">
        <button aria-label="Minimizar vista"><svg class="i10" viewBox="0 0 10 10"><path d="M0 7.500h10" stroke="#fff" stroke-width="3"/></svg></button>
        <button aria-label="Restaurar vista"><svg class="i10" viewBox="0 0 10 10"><path d="M1 4h5v5H1zM3 1h6v6" fill="none" stroke="#fff" stroke-width="2"/></svg></button>
        <button aria-label="Cerrar vista"><svg class="i10" viewBox="0 0 10 10"><path d="M1 1l7 8M8 1L1 9" stroke="#fff" stroke-width="2.500"/></svg></button>
      </div>
      <div class="cube">
        <span class="n">N</span><span class="w">O</span><button>SUPERIOR</button><span class="e">E</span><span class="s">S</span>
      </div>
      <button class="scu">SCU<svg viewBox="0 0 10 6"><path d="M1 1h8L5 5z" fill="none" stroke="#c9ccda"/></svg></button>
    </div>
    <aside class="navbar" aria-label="Barra de navegación">
      <svg viewBox="0 0 32 212" fill="none" stroke="#44484d">
        <circle cx="26" cy="6" r="3.500" fill="#44484d"/><path d="M24 4l4 4M28 4l-4 4" stroke="#777"/>
        <path d="M6 31a11 11 0 0111-11h10v11A10.500 10.500 0 016 31z"/><circle cx="16" cy="31" r="6.500"/><circle cx="16" cy="31" r="4"/>
        <path d="M14 50h5l-2.500 3zM14 120h5l-2.500 3zM14 158h5l-2.500 3z" fill="#44484d"/>
        <path d="M4 57.500h25" stroke="#777"/>
        <path d="M11 83l-5-8c-1-2 1-2 2-1l4 4-3-11c0-2 2-2 2 0l3 8-1-12c0-2 2-2 2.500 0l1 12 2-11c1-2 2-1 2 0l-1 12 4-7c1-2 3-1 2 1l-4 13z" stroke-width="1.200"/>
        <path d="M5 92l17 15M5 106L21 91M5 97v-5h5M16 91h5v5" /><circle cx="21" cy="104" r="5"/><path d="M24 108l4 4" stroke-width="2"/>
        <path d="M16 127v20M13 131l3-5 3 5M13 144l3 4 3-4M12 133c-8 2-9 6-3 8 8 2 18 0 18-4s-8-4-9-4M12 136l-5 5 5 2" stroke-width="1.300"/>
        <path d="M4.500 169.500h6v6h-6zM12.500 169.500h6v6h-6zM20.500 169.500h6v6h-6zM4.500 178.500h16v13h-16z"/><path d="M9 181l7 4-7 4z" fill="#44484d"/>
        <circle cx="26" cy="206" r="3.500"/><path d="M24 206h4"/>
      </svg>
    </aside>
  </main>

  <footer class="status">
    <button class="burger" aria-label="Menú de presentaciones"><svg class="menuico"><use href="#menu"/></svg></button>
    <button class="model">Modelo</button>
    <button class="layout">Layout1</button>
    <span class="slash"></span>
    <button class="add" aria-label="Nueva presentación"><svg class="plusico"><use href="#plus"/></svg></button>
    <span class="slash"></span>
    <div class="sgroups">
      <div class="sg"><button class="word">MODELO</button></div>
      <div class="sg"><button aria-label="Rejilla"><svg class="i16"><use href="#s-grid"/></svg></button><button aria-label="Forzcursor"><svg class="i16"><use href="#s-snap"/></svg></button><button class="n16" aria-label="Opciones"><svg class="arr"><use href="#down"/></svg></button></div>
      <div class="sg"><button aria-label="Orto"><svg class="i16"><use href="#s-ortho"/></svg></button><button class="lit" aria-label="Polar"><svg class="i16"><use href="#s-polar"/></svg></button><button class="n16" aria-label="Opciones"><svg class="arr"><use href="#down"/></svg></button><button aria-label="Isométrico"><svg class="i16"><use href="#s-iso"/></svg></button><button class="n16" aria-label="Opciones"><svg class="arr"><use href="#down"/></svg></button><button class="lit" aria-label="Rastreo"><svg class="i16"><use href="#s-track"/></svg></button><button class="lit" aria-label="Referencia"><svg class="i16"><use href="#s-osnap"/></svg></button><button class="n16" aria-label="Opciones"><svg class="arr"><use href="#down"/></svg></button></div>
      <div class="sg"><button class="lit" aria-label="Visibilidad de anotación"><svg class="i16"><use href="#s-annvis"/></svg></button><button aria-label="Escala automática"><svg class="i16"><use href="#s-annauto"/></svg></button><button aria-label="Escala de anotación"><svg class="i16"><use href="#s-ann"/></svg></button><button class="scale">1:1<svg class="arr"><use href="#down"/></svg></button></div>
      <div class="sg"><button aria-label="Espacio de trabajo"><svg class="i16"><use href="#s-gear"/></svg></button><button class="n16" aria-label="Opciones"><svg class="arr"><use href="#down"/></svg></button></div>
      <div class="sg"><button aria-label="Monitor de anotación"><svg class="i16"><use href="#plus"/></svg></button></div>
      <div class="sg"><button aria-label="Aislar objetos"><svg class="i16"><use href="#s-units"/></svg></button></div>
      <div class="sg"><button class="wide" aria-label="Rendimiento gráfico"><svg class="i16"><use href="#s-hw"/></svg></button></div>
      <div class="sg"><button aria-label="Pantalla limpia"><svg class="i16"><use href="#s-full"/></svg></button></div>
      <div class="sg"><button aria-label="Personalización"><svg class="i16"><use href="#menu"/></svg></button></div>
    </div>
  </footer>
</div>
</body>
</html>
```
FILE: styles.css
```css
* { box-sizing: border-box; }
body { margin: 0; background: #222830; color: #e8e8e8; font: 12px/16px "Open Sans", "Noto Sans", sans-serif; }
button { margin: 0; padding: 0; border: 0; background: none; color: inherit; font: inherit; display: flex; align-items: center; justify-content: center; white-space: nowrap; }
svg { display: block; flex: none; }
.sprite { position: absolute; width: 0; height: 0; }
.i16 { width: 16px; height: 16px; overflow: visible; }
.i32 { width: 32px; height: 32px; overflow: visible; }
.i10 { width: 10px; height: 10px; }
.arr { width: 8px; height: 4px; }
.arr-s { width: 5px; height: 3px; }
.lit { color: #d9d9d9; }
.dim { color: #5c626b; }
.faded { opacity: .5; }

.app { height: 100vh; display: flex; flex-direction: column; border: 1px solid #0a93dc; overflow: hidden; }

/* Title bar */
.titlebar { display: flex; align-items: center; height: 31px; flex: none; padding-left: 14px; margin-bottom: 4px; }
.logo { width: 24px; height: 22px; background: #e51050; border-left: 4px solid #f0568a; border-bottom: 3px solid #8a0f35; color: #fff; font: bold 14px/16px "Open Sans", sans-serif; }
.drop { width: 14px; }
.quick { display: flex; align-items: center; margin-left: 4px; }
.quick button { width: 24px; height: 24px; }
.quick .narrow { width: 12px; }
.quick .more { width: 16px; height: 10px; flex-direction: column; gap: 3px; }
.quick .more::before { content: ""; width: 8px; height: 1px; background: #d4d7db; }
.share { gap: 4px; color: #8ecbff; margin-left: 4px; }
h1 { flex: 1; margin: 0; font: inherit; color: #f0f0f0; text-align: center; white-space: pre; overflow: hidden; }
.play { border-left: 5px solid #d9d9d9; border-top: 4px solid transparent; border-bottom: 4px solid transparent; margin: 0 7px 0 0; }
.search { width: 178px; height: 20px; border: 0; padding: 0 3px; background: #454f61; color: #fff; font: italic 11px/16px "Open Sans", sans-serif; }
.search::placeholder { color: #b4bac4; opacity: 1; }
.tb24 { width: 24px; height: 24px; }
.tb36 { width: 36px; height: 24px; gap: 5px; }
.account { gap: 5px; width: 118px; padding: 0 2px 0 5px; }
.account span { flex: 1; text-align: left; font-size: 11px; }
.account + .tb24 { margin-left: 5px; }
.help { height: 18px; border-left: 1px solid #4c5a70; margin-left: 5px; padding-left: 9px; gap: 7px; }
.help i { width: 16px; height: 16px; border-radius: 8px; background: #d4d4d4; color: #333; font: bold 12px/16px "Open Sans", sans-serif; text-align: center; }
.winctl { display: flex; margin-left: 64px; }
.winctl button { width: 46px; height: 30px; }

/* Ribbon tabs */
.tabs { display: flex; align-items: center; height: 20px; flex: none; padding-left: 7px; color: #b9bdc3; }
.tabs button { height: 20px; padding: 0 8px; }
.tabs .on { background: #3b4453; color: #f0f0f0; }
.tabs .fold { padding: 0; margin: 0 4px 0 24px; width: 16px; height: 8px; background: #eee; }
.fold span { border-bottom: 3px solid #333; border-left: 3px solid transparent; border-right: 3px solid transparent; }

/* Ribbon */
.ribbon { display: flex; height: 99px; flex: none; margin: 0 4px; background: #3b4453; }
.panel { display: flex; flex-direction: column; padding: 4px 0 1px; border-right: 1px solid #262d37; margin-top: 1px; }
.tools { flex: 1; display: flex; align-items: flex-start; }
.ptitle { height: 18px; gap: 7px; }
.hot { background: #272e38; margin: 0 1px; }
.draw { width: 243px; }
.modify { width: 133px; }
.annot { width: 133px; }
.layer { width: 285px; }
.block { width: 133px; }
.big { flex-direction: column; padding-top: 2px; line-height: 15px; }
.block .big { font-size: 11px; }
.big .i32 { margin-bottom: 4px; }
.big .arr-s { margin-top: 2px; }
.w42 { width: 42px; } .w44 { width: 44px; } .w46 { width: 46px; } .w52 { width: 52px; } .w62 { width: 62px; } .w74 { width: 74px; }
.small { display: grid; grid-auto-rows: 24px; }
.small button { width: 24px; height: 24px; }
.small .dd { width: 34px; gap: 7px; }
.one { margin-left: 5px; }
.annot .one { margin-left: 4px; }
.block .one { margin-left: 7px; }
.one button { justify-content: flex-start; }
.four { grid-template-columns: 30px 29px 41px 24px; padding-left: 2px; }
.four .dd { justify-content: flex-start; padding-left: 4px; width: 40px; }
.layersel { display: flex; align-items: center; width: 208px; height: 23px; gap: 3px; padding: 0 1px 0 3px; background: #4a566a; border: 1px solid #262d37; margin-top: 1px; }
.layersel i { width: 14px; height: 14px; background: #fff; margin: 0 1px 0 2px; }
.layersel select { flex: 1; appearance: none; border: 0; background: none; color: #fff; font: 12px/16px "Open Sans", sans-serif; padding: 0; }
.five { grid-template-columns: repeat(5, 24px); }
.folded { display: flex; gap: 3px; padding: 2px 0 2px 1px; }
.folded button { flex-direction: column; justify-content: flex-start; width: 58px; height: 95px; padding: 4px 0; background: #4d5a6d; outline: 1px solid #262d37; font-size: 11px; }
.folded span { flex: 1; padding-top: 3px; }

/* File tabs */
.files { display: flex; align-items: stretch; height: 31px; flex: none; padding: 3px 0 0 12px; margin: 0 3px; border-bottom: 4px solid #3b4453; }
.burger { width: 24px; }
.menuico { width: 16px; height: 14px; }
.plusico { width: 14px; height: 14px; }
.slash { width: 10px; margin: 0 3px; background: linear-gradient(113deg, transparent 46%, #4a5566 46%, #4a5566 54%, transparent 54%); height: 18px; align-self: center; }
.start { width: 42px; }
.file { display: flex; align-items: center; justify-content: space-between; width: 274px; padding: 0 11px 0 17px; background: #3b4453; clip-path: polygon(10px 0, 100% 0, 264px 100%, 0 100%); white-space: pre; }
.file b { font-weight: 600; color: #f4f4f4; }
.x { width: 9px; height: 10px; }
.add { width: 30px; }

/* Drawing area */
.canvas { position: relative; flex: 1; margin: 0 3px; overflow: hidden; border-bottom: 4px solid #3b4453; }
.drawing { position: absolute; left: 0; top: 0; pointer-events: none; font-family: "Liberation Sans", Arial, sans-serif; }
.white { fill: #f0f0f0; } .yellow { fill: #f0f000; } .green { fill: #00f000; } .red { fill: #f00000; } .cyan { fill: #00f0f0; }
.s5 { font-size: 5px; } .s6 { font-size: 6px; } .s7 { font-size: 7px; } .s8 { font-size: 8px; } .s9 { font-size: 9px; } .s10 { font-size: 10px; } .s13 { font-size: 13px; }
.sans9 { font: 9px "Open Sans", sans-serif; }
.viewlabel { position: absolute; left: 4px; top: 6px; margin: 0; font-size: 11px; }
.cad { position: absolute; border-collapse: collapse; table-layout: fixed; font: 8px/10px "Liberation Sans", Arial, sans-serif; color: #f0f0f0; text-align: center; }
.cad th, .cad td { border: 1px solid #e60000; padding: 0; font-weight: normal; white-space: nowrap; overflow: hidden; }
.cad .t7 { font-size: 7px; } .cad .t9 { font-size: 9px; } .cad .t20 { font-size: 20px; line-height: 24px; }
.cad .left { text-align: left; padding-left: 1px; }
.cad .near { padding-right: 8px; }
.cad .wide { padding-right: 20px; }
.cad .far { padding-left: 8px; }
.cad .push { padding-left: 30px; }
.cad .low { padding-top: 12px; }
.cad .blue { color: #7fa8f0; }
.feeders { left: 9px; top: 289px; width: 724px; }
.loads { left: -1px; top: 426px; width: 896px; font-size: 10px; line-height: 12px; }
.loads td { padding-top: 1px; vertical-align: top; }
.summary { left: 915px; top: 481px; width: 352px; }
.summary .t9 { padding: 3px 0 0 42px; }
.summary td { font-size: 9px; vertical-align: top; }
.h11 { height: 11px; } .h13 { height: 13px; } .h14 { height: 14px; } .h16 { height: 16px; } .h17 { height: 17px; } .h18 { height: 18px; } .h19 { height: 19px; } .h20 { height: 20px; } .h21 { height: 21px; } .h36 { height: 36px; }
.c28 { width: 28px; } .c34 { width: 34px; } .c36 { width: 36px; } .c38 { width: 38px; } .c40 { width: 40px; } .c43 { width: 43px; } .c44 { width: 44px; } .c45 { width: 45px; } .c46 { width: 46px; } .c49 { width: 49px; } .c50 { width: 50px; } .c54 { width: 54px; } .c55 { width: 55px; } .c58 { width: 58px; } .c60 { width: 60px; } .c61 { width: 61px; } .c65 { width: 65px; } .c69 { width: 69px; } .c71 { width: 71px; } .c74 { width: 74px; } .c76 { width: 76px; } .c102 { width: 102px; } .c109 { width: 109px; } .c134 { width: 134px; } .c246 { width: 246px; }

.overlay { position: absolute; right: 11px; top: 10px; width: 92px; display: flex; flex-direction: column; align-items: center; }
.vpctl { display: flex; gap: 10px; align-self: flex-end; }
.cube { display: grid; grid-template: 18px 60px 18px / 18px 1fr 18px; place-items: center; width: 96px; margin: 14px 4px 0 0; color: #b9bbbe; font: bold 13px/16px "Open Sans", sans-serif; background: radial-gradient(circle, transparent 33px, #4b5057 34px, #4b5057 42px, transparent 43px); }
.cube .n, .cube .s { grid-column: 1 / 4; }
.cube button { width: 36px; height: 36px; background: #a9b0b4; border: 4px solid #b9b9b9; color: #444a50; font: bold 7px/10px "Liberation Sans", sans-serif; }
.scu { width: 46px; height: 18px; margin: 14px 5px 0 0; border-radius: 4px; background: #8f93a3; border: 1px solid #a4a7b4; color: #c9ccda; font-size: 11px; gap: 5px; }
.scu svg { width: 10px; height: 6px; }
.navbar { position: absolute; right: 4px; top: 187px; width: 32px; border-radius: 4px; background: rgba(122, 125, 128, .72); }
.navbar svg { width: 32px; height: 212px; }

/* Status bar */
.status { display: flex; align-items: flex-start; height: 32px; flex: none; padding-left: 15px; }
.status > button { height: 25px; }
.status > .slash { margin-top: 4px; align-self: flex-start; }
.status .model { width: 76px; margin-left: 5px; background: #3b4453; clip-path: polygon(10px 0, 100% 0, 66px 100%, 0 100%); font-weight: 600; color: #fff; }
.status .layout { width: 54px; }
.sgroups { display: flex; gap: 3px; margin: 2px 3px 0 auto; }
.sg { display: flex; height: 24px; background: #3b4453; }
.sg button { width: 24px; height: 24px; }
.sg .lit { width: 22px; height: 22px; margin: 1px 0 0 1px; background: #5f8fc4; }
.sg .n16 { width: 16px; }
.sg .word { width: 56px; }
.sg .wide { width: 30px; }
.sg .scale { width: 34px; gap: 4px; }
```
